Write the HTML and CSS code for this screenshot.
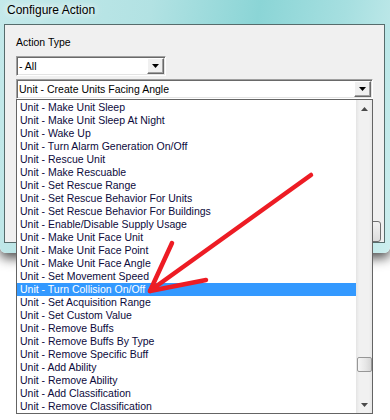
FILE: index.html
```html
<html>

<head>
  <meta name="viewport" content="width=device-width, initial-scale=1" />
  <link rel="stylesheet" href="styles.css">
  <title>Configure Action</title>
</head>

<body>
  <div class="window">
    <div class="titlebar">Configure Action</div>

    <div class="client">
      <label class="field-label">Action Type</label>

      <div class="combo combo-small">
        <span class="combo-text">- All</span>
        <span class="combo-btn">
          <svg width="7" height="4" viewBox="0 0 7 4"><polygon points="0,0 7,0 3.5,4" fill="#000" /></svg>
        </span>
      </div>

      <div class="combo-wrap">
        <div class="combo">
          <span class="combo-text">Unit - Create Units Facing Angle</span>
          <span class="combo-btn">
            <svg width="7" height="4" viewBox="0 0 7 4"><polygon points="0,0 7,0 3.5,4" fill="#000" /></svg>
          </span>
        </div>

        <!-- open drop-down list -->
        <div class="dropdown">
          <ul class="items">
            <li>Unit - Make Unit Sleep</li>
            <li>Unit - Make Unit Sleep At Night</li>
            <li>Unit - Wake Up</li>
            <li>Unit - Turn Alarm Generation On/Off</li>
            <li>Unit - Rescue Unit</li>
            <li>Unit - Make Rescuable</li>
            <li>Unit - Set Rescue Range</li>
            <li>Unit - Set Rescue Behavior For Units</li>
            <li>Unit - Set Rescue Behavior For Buildings</li>
            <li>Unit - Enable/Disable Supply Usage</li>
            <li>Unit - Make Unit Face Unit</li>
            <li>Unit - Make Unit Face Point</li>
            <li>Unit - Make Unit Face Angle</li>
            <li>Unit - Set Movement Speed</li>
            <li class="selected">Unit - Turn Collision On/Off</li>
            <li>Unit - Set Acquisition Range</li>
            <li>Unit - Set Custom Value</li>
            <li>Unit - Remove Buffs</li>
            <li>Unit - Remove Buffs By Type</li>
            <li>Unit - Remove Specific Buff</li>
            <li>Unit - Add Ability</li>
            <li>Unit - Remove Ability</li>
            <li>Unit - Add Classification</li>
            <li>Unit - Remove Classification</li>
          </ul>

          <div class="scrollbar">
            <div class="scroll-btn">
              <svg width="7" height="4" viewBox="0 0 7 4"><polygon points="0,4 7,4 3.5,0" fill="#4a4a4a" /></svg>
            </div>
            <div class="track">
              <div class="thumb" style="margin-top: 240px"></div>
            </div>
            <div class="scroll-btn">
              <svg width="7" height="4" viewBox="0 0 7 4"><polygon points="0,0 7,0 3.5,4" fill="#4a4a4a" /></svg>
            </div>
          </div>
        </div>
      </div>

      <div class="footer">
        <span class="dlg-btn"></span>
      </div>
    </div>
  </div>

  <!-- red arrow drawn on top of the screenshot -->
  <svg class="annotation" width="390" height="420" viewBox="0 0 390 420">
    <g stroke="#ed1c24" stroke-width="4.5" stroke-linecap="round" fill="none">
      <path d="M311 175 L151 290" />
      <path d="M172 243 L150 291" />
      <path d="M150 291 L206 280" />
    </g>
  </svg>
</body>

</html>
```

FILE: styles.css
```css
* {
  box-sizing: border-box;
}

body {
  margin: 0;
  width: 390px;
  height: 420px;
  overflow: hidden;
  position: relative;
  background: #fff;
  font-family: "Liberation Sans", Arial, sans-serif;
  font-size: 10.5px;
  color: #000;
}

.window {
  height: 253px;
  padding: 0 5px 0 4px;
  border-radius: 0 0 6px 6px;
  background: linear-gradient(100deg, #c4e9ea 0%, #b2e2e3 35%, #8bd5d6 60%, #a6dfe0 80%, #cdeeee 100%);
  box-shadow: 0 5px 12px rgba(0, 0, 0, 0.7);
}

.titlebar {
  height: 24px;
  line-height: 20px;
  padding-left: 3px;
  font-size: 12px;
  text-shadow: 0 0 6px #fff, 0 0 10px #fff;
}

.client {
  height: 219px;
  display: flex;
  flex-direction: column;
  padding: 11px 11px 0 11px;
  background: #f0f0f0;
  border: 1px solid #566c6c;
}

.field-label {
  display: block;
  line-height: 13px;
}

.combo {
  display: flex;
  align-items: center;
  height: 20px;
  padding: 1px 1px 1px 2px;
  background: #fff;
  border: 1px solid;
  border-color: #a0a0a0 #fff #fff #a0a0a0;
  box-shadow: inset 1px 1px 0 #696969, inset -1px -1px 0 #e3e3e3;
}

.combo-small {
  width: 150px;
  margin-top: 7px;
}

.combo-text {
  flex: 1;
  white-space: nowrap;
}

.combo-btn {
  width: 17px;
  height: 16px;
  display: flex;
  align-items: center;
  justify-content: center;
  background: #f0f0f0;
  border: 1px solid;
  border-color: #fff #696969 #696969 #fff;
  box-shadow: inset -1px -1px 0 #a0a0a0;
}

.combo-wrap {
  position: relative;
  margin-top: 3px;
}

.dropdown {
  position: absolute;
  top: 20px;
  left: 0;
  right: 0;
  height: 315px;
  display: flex;
  background: #fff;
  border: 1px solid #646464;
  z-index: 2;
}

.items {
  flex: 1;
  list-style: none;
  margin: 0;
  padding: 1px 0 0;
}

.items li {
  height: 13px;
  line-height: 13px;
  padding-left: 3px;
  white-space: nowrap;
  color: #0c0a3c;
}

.items li.selected {
  background: #3399ff;
  color: #fff;
}

.scrollbar {
  width: 16px;
  display: flex;
  flex-direction: column;
  background: linear-gradient(90deg, #e4e4e4, #f1f1f1 20%, #f1f1f1 80%, #e7e7e7);
}

.scroll-btn {
  height: 17px;
  display: flex;
  align-items: center;
  justify-content: center;
}

.track {
  flex: 1;
}

.thumb {
  width: 15px;
  height: 15px;
  margin-left: 1px;
  border: 1px solid #979797;
  border-radius: 2px;
  background: linear-gradient(90deg, #f6f6f6, #e6e6e6 60%, #d6d6d6);
}

.footer {
  margin-top: auto;
  display: flex;
  justify-content: flex-end;
  margin-right: -8px;
}

.dlg-btn {
  width: 75px;
  height: 21px;
  border: 1px solid #707070;
  border-radius: 3px;
  background: linear-gradient(#f2f2f2, #dcdcdc);
}

.annotation {
  position: absolute;
  top: 0;
  left: 0;
  pointer-events: none;
  z-index: 3;
}
```
